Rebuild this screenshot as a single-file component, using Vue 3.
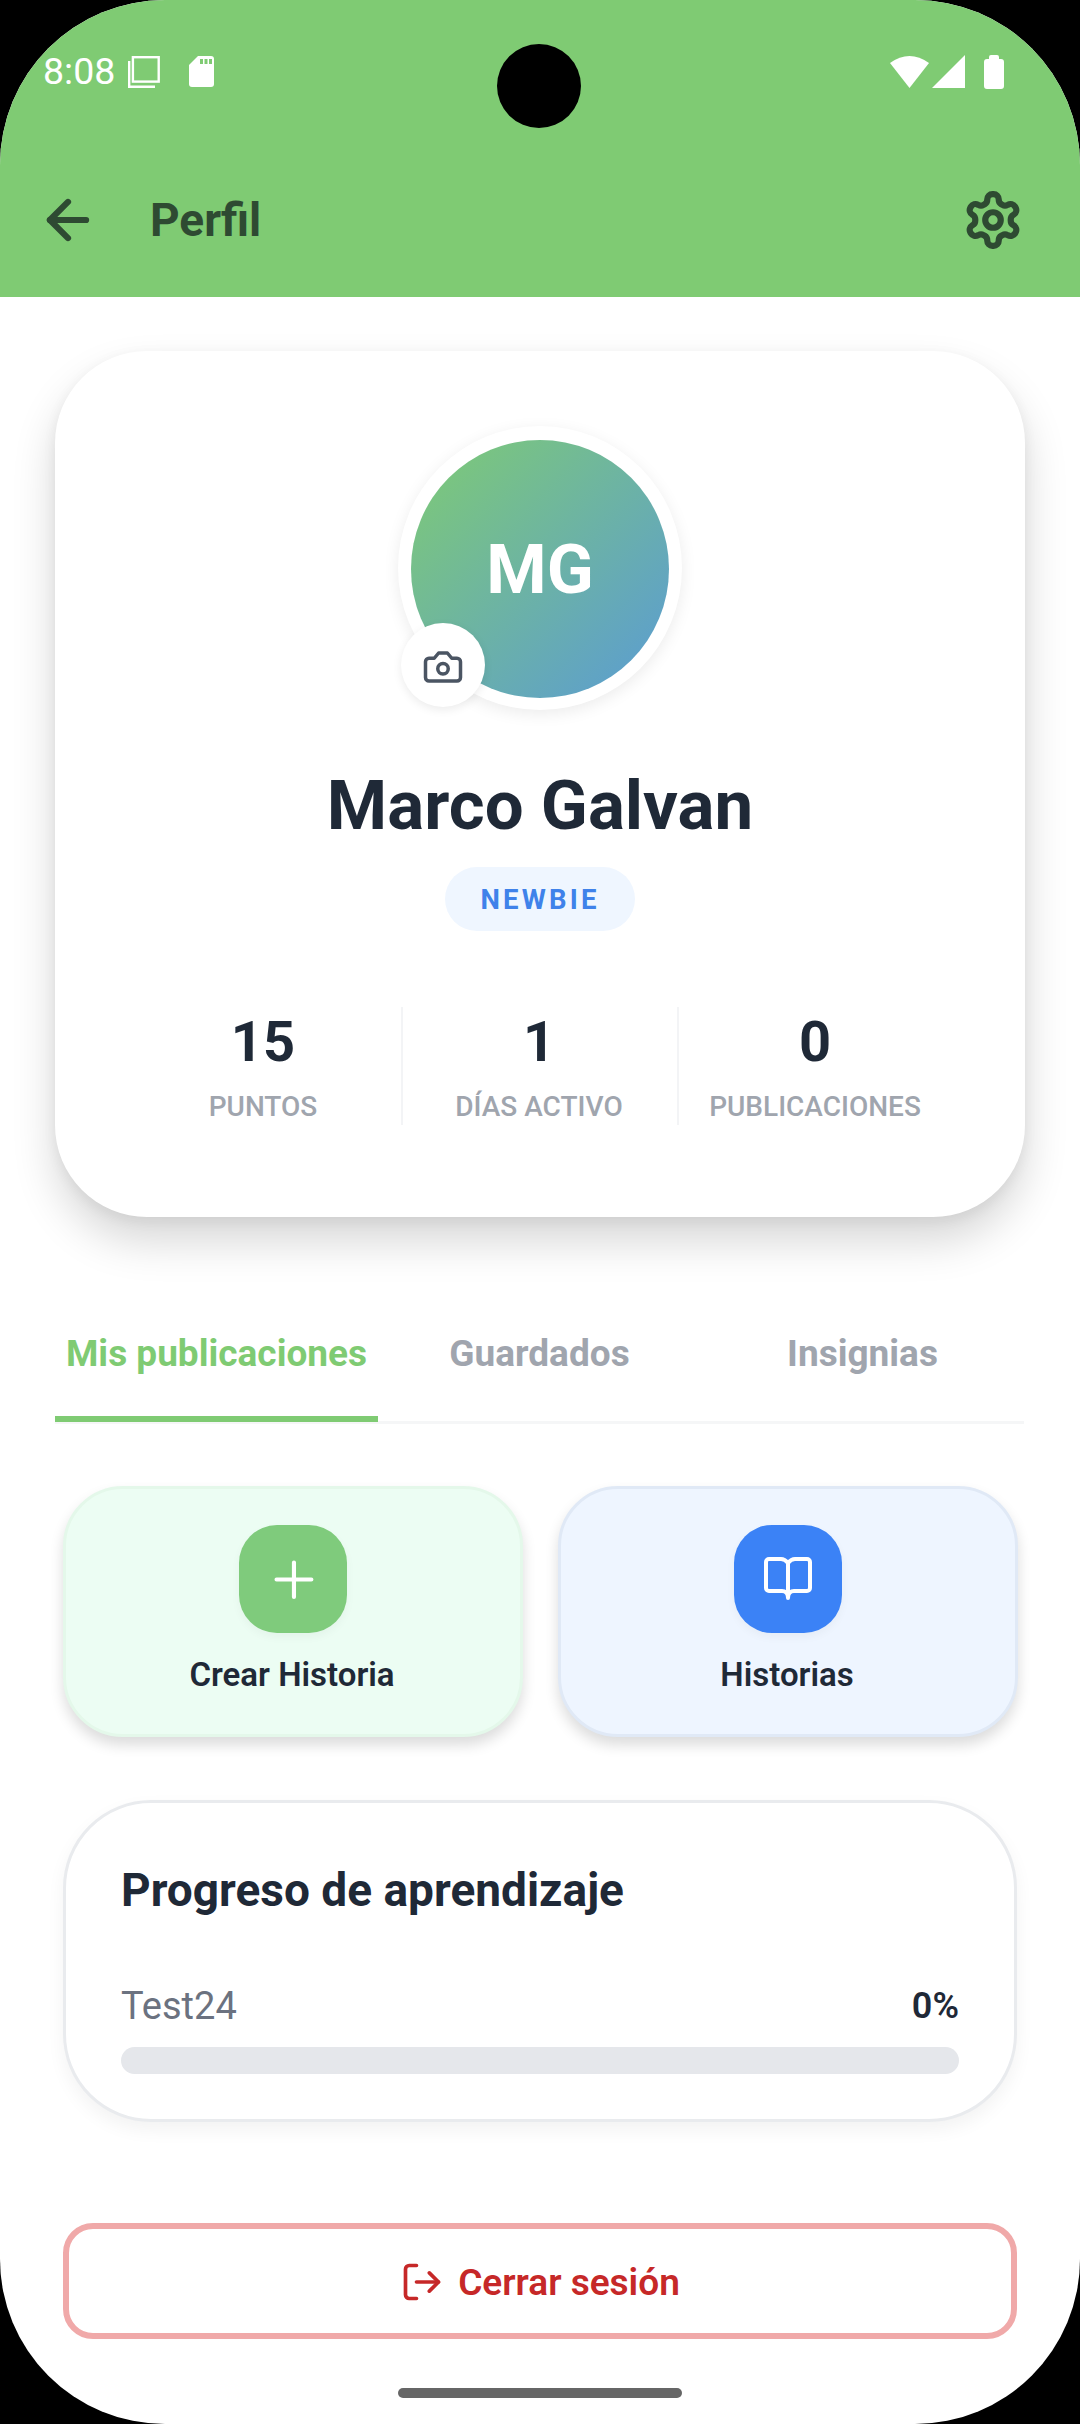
<script setup>
const stats = [
  { value: '15', label: 'PUNTOS' },
  { value: '1', label: 'DÍAS ACTIVO' },
  { value: '0', label: 'PUBLICACIONES' }
]
const tabs = ['Mis publicaciones', 'Guardados', 'Insignias']
</script>

<template>
  <div class="device">
    <div class="screen">
      <header class="header">
        <div class="status">
          <span class="time">8:08</span>
          <svg class="ic-layers" width="32" height="32" viewBox="0 0 32 32" fill="none" stroke="#fff" stroke-width="2.4">
            <rect x="4.9" y="1.2" width="25.8" height="24.4" />
            <path d="M1.2 5V30.8H27" />
          </svg>
          <svg class="ic-sd" width="25" height="31" viewBox="0 0 25 31">
            <path fill="#fff" d="M9 0H22a3 3 0 0 1 3 3V28a3 3 0 0 1-3 3H3a3 3 0 0 1-3-3V9Z" />
            <path fill="#7FCB73" d="M11 3h3v5h-3zM15.500 3h3v5h-3zM20 3h3v5h-3z" />
          </svg>
          <div class="status-right">
            <svg width="39" height="32" viewBox="0 0 39 32"><path fill="#fff" d="M0 7Q19.500-7 39 7L19.500 32Z" /></svg>
            <svg class="ic-signal" width="33" height="33" viewBox="0 0 33 33"><path fill="#fff" d="M33 0V33H0Z" /></svg>
            <svg class="ic-battery" width="20" height="34" viewBox="0 0 20 34">
              <path fill="#fff" d="M5 4V2a2 2 0 0 1 2-2h6a2 2 0 0 1 2 2v2h2a3 3 0 0 1 3 3V31a3 3 0 0 1-3 3H3a3 3 0 0 1-3-3V7a3 3 0 0 1 3-3Z" />
            </svg>
          </div>
        </div>
        <div class="appbar">
          <svg class="ic-back" width="62" height="62" viewBox="0 0 24 24" fill="none" stroke="#2E4A32" stroke-width="2.4" stroke-linecap="round" stroke-linejoin="round">
            <path d="m12 19-7-7 7-7" /><path d="M19 12H5" />
          </svg>
          <span class="title">Perfil</span>
          <svg class="ic-gear" width="62" height="62" viewBox="0 0 24 24" fill="none" stroke="#2E4A32" stroke-width="2.4" stroke-linecap="round" stroke-linejoin="round">
            <path d="M12.220 2h-.44a2 2 0 0 0-2 2v.18a2 2 0 0 1-1 1.730l-.43.25a2 2 0 0 1-2 0l-.15-.08a2 2 0 0 0-2.730.73l-.22.38a2 2 0 0 0 .73 2.730l.15.1a2 2 0 0 1 1 1.720v.51a2 2 0 0 1-1 1.740l-.15.09a2 2 0 0 0-.73 2.730l.22.38a2 2 0 0 0 2.730.73l.15-.08a2 2 0 0 1 2 0l.43.25a2 2 0 0 1 1 1.730V20a2 2 0 0 0 2 2h.44a2 2 0 0 0 2-2v-.18a2 2 0 0 1 1-1.730l.43-.25a2 2 0 0 1 2 0l.15.08a2 2 0 0 0 2.730-.73l.22-.39a2 2 0 0 0-.73-2.730l-.15-.08a2 2 0 0 1-1-1.740v-.5a2 2 0 0 1 1-1.740l.15-.09a2 2 0 0 0 .73-2.730l-.22-.38a2 2 0 0 0-2.730-.73l-.15.08a2 2 0 0 1-2 0l-.43-.25a2 2 0 0 1-1-1.730V4a2 2 0 0 0-2-2z" />
            <circle cx="12" cy="12" r="3" />
          </svg>
        </div>
      </header>

      <section class="card">
        <div class="avatar">
          <div class="avatar-inner">MG</div>
          <div class="camera">
            <svg width="42" height="42" viewBox="0 0 24 24" fill="none" stroke="#4B5563" stroke-width="2" stroke-linecap="round" stroke-linejoin="round">
              <path d="M14.500 4h-5L7 7H4a2 2 0 0 0-2 2v9a2 2 0 0 0 2 2h16a2 2 0 0 0 2-2V9a2 2 0 0 0-2-2h-3l-2.500-3z" />
              <circle cx="12" cy="13" r="3" />
            </svg>
          </div>
        </div>
        <h1 class="name">Marco Galvan</h1>
        <div class="badge">NEWBIE</div>
        <div class="stats">
          <div v-for="s in stats" :key="s.label" class="stat">
            <div class="stat-value">{{ s.value }}</div>
            <div class="stat-label">{{ s.label }}</div>
          </div>
        </div>
      </section>

      <nav class="tabs">
        <div v-for="(t, i) in tabs" :key="t" class="tab" :class="{ active: i === 0 }">{{ t }}</div>
      </nav>

      <div class="actions">
        <div class="action green">
          <div class="action-icon">
            <svg width="55" height="55" viewBox="0 0 24 24" fill="none" stroke="#fff" stroke-width="1.800" stroke-linecap="round">
              <path d="M4.600 12h15.200M12.200 4.600v15" />
            </svg>
          </div>
          <div class="action-label">Crear Historia</div>
        </div>
        <div class="action blue">
          <div class="action-icon">
            <svg width="48" height="44" viewBox="0 0 48 44" fill="none" stroke="#fff" stroke-width="4" stroke-linecap="round" stroke-linejoin="round">
              <path d="M24 6C22 3.500 20 2 17 2H5a3 3 0 0 0-3 3V31a3 3 0 0 0 3 3H18C21 34 24 36 24 41C24 36 27 34 30 34H43a3 3 0 0 0 3-3V5a3 3 0 0 0-3-3H31C28 2 26 3.500 24 6ZM24 6V41" />
            </svg>
          </div>
          <div class="action-label">Historias</div>
        </div>
      </div>

      <section class="progress">
        <h2 class="progress-title">Progreso de aprendizaje</h2>
        <div class="progress-row">
          <span class="progress-name">Test24</span>
          <span class="progress-value">0%</span>
        </div>
        <div class="bar"></div>
      </section>

      <button class="logout">
        <svg width="44" height="44" viewBox="0 0 24 24" fill="none" stroke="#C62828" stroke-width="2" stroke-linecap="round" stroke-linejoin="round">
          <path d="M9 21H5a2 2 0 0 1-2-2V5a2 2 0 0 1 2-2h4" /><path d="m16 17 5-5-5-5" /><path d="M21 12H9" />
        </svg>
        <span>Cerrar sesión</span>
      </button>

      <div class="punch"></div>
      <div class="home"></div>
    </div>
  </div>
</template>

<style>
html, body { margin: 0; background: #000; }
</style>

<style scoped>
* { box-sizing: border-box; }
.device { width: 1080px; height: 2424px; background: #000; font-family: Roboto, "Noto Sans", sans-serif; }
.screen { position: relative; width: 1080px; height: 2424px; background: #fff; border-radius: 165px; overflow: hidden; }

.header { height: 297px; background: #7FCB73; }
.status { height: 143px; display: flex; align-items: center; padding: 0 76px 0 43px; color: #fff; }
.time { font-size: 37.500px; font-weight: 400; line-height: 1; width: 70px; }
.ic-layers { margin-left: 15px; }
.ic-sd { margin-left: 29px; }
.status-right { margin-left: auto; display: flex; align-items: center; }
.ic-signal { margin-left: 3px; }
.ic-battery { margin-left: 19px; }
.appbar { height: 154px; display: flex; align-items: center; padding: 0 56px 0 37px; color: #2E4A32; }
.title { margin-left: 51px; font-size: 46px; font-weight: 700; }
.ic-gear { margin-left: auto; }

.card { margin: 54px 55px 0; height: 866px; padding-top: 75px; background: #fff; border-radius: 92px; display: flex; flex-direction: column; align-items: center; box-shadow: 0 24px 44px rgba(0,0,0,.16), 0 4px 14px rgba(0,0,0,.06); }
.avatar { position: relative; width: 284px; height: 284px; border-radius: 50%; background: #fff; padding: 14px 13px 12px; box-shadow: 0 4px 16px rgba(0,0,0,.08); }
.avatar-inner { width: 100%; height: 100%; border-radius: 50%; background: linear-gradient(135deg, #7FCB73, #5A9BD5); color: #fff; font-size: 69px; font-weight: 700; display: flex; align-items: center; justify-content: center; }
.camera { position: absolute; left: 3px; top: 197px; width: 84px; height: 84px; padding-top: 4px; border-radius: 50%; background: #fff; display: flex; align-items: center; justify-content: center; box-shadow: 0 3px 10px rgba(0,0,0,.08); }
.name { margin: 54px 0 0; font-size: 69px; line-height: 84px; font-weight: 700; color: #1F2937; }
.badge { margin-top: 19px; width: 190px; height: 64px; border-radius: 32px; background: #EFF6FF; color: #3F82EA; font-size: 27.500px; font-weight: 700; letter-spacing: 3.200px; display: flex; align-items: center; justify-content: center; }
.stats { margin-top: 76px; width: 828px; height: 118px; display: grid; grid-template-columns: repeat(3, 1fr); }
.stat { position: relative; padding-right: 2px; text-align: center; }
.stat:not(:last-child)::after { content: ""; position: absolute; right: -1px; top: 0; bottom: 0; width: 2px; background: #F3F4F6; }
.stat-value { font-size: 56px; line-height: 70px; font-weight: 700; color: #1F2937; }
.stat-label { margin-top: 12px; font-size: 28px; line-height: 36px; font-weight: 500; color: #A0A5AE; }

.tabs { margin: 73px 56px 0 55px; display: grid; grid-template-columns: repeat(3, 1fr); border-bottom: 3px solid #F5F6F7; }
.tab { height: 132px; margin-bottom: -1px; padding: 40px 0 38px; border-bottom: 6px solid transparent; text-align: center; font-size: 37px; line-height: 48px; font-weight: 700; color: #A0A5AE; }
.tab.active { color: #7FCB73; border-bottom-color: #7FCB73; }

.actions { margin: 62px 62px 0 63px; display: grid; grid-template-columns: 460px 460px; column-gap: 35px; }
.action { height: 251px; padding-top: 36px; border-radius: 60px; border-width: 3px; border-style: solid; display: flex; flex-direction: column; align-items: center; box-shadow: 0 8px 14px rgba(0,0,0,.14); }
.action.green { background: #ECFDF3; border-color: #E4F8EA; }
.action.blue { background: #EEF5FF; border-color: #E0E9F6; }
.action-icon { width: 108px; height: 108px; border-radius: 38px; display: flex; align-items: center; justify-content: center; box-shadow: 0 4px 10px rgba(0,0,0,.04); }
.green .action-icon { background: #7FCB7C; }
.blue .action-icon { background: #3B82F6; }
.action-label { margin: 20px 2px 0 0; font-size: 33px; line-height: 44px; font-weight: 600; color: #1F2937; }

.progress { margin: 63px 63px 0; height: 322px; padding: 59px 55px 0; border: 3px solid #E9EBEE; border-radius: 88px; background: #fff; box-shadow: 0 8px 18px rgba(0,0,0,.05); }
.progress-title { margin: 0; font-size: 46px; line-height: 56px; font-weight: 700; color: #1F2937; }
.progress-row { margin-top: 65px; display: flex; justify-content: space-between; line-height: 46px; }
.progress-name { font-size: 38px; font-weight: 400; color: #6B7280; }
.progress-value { font-size: 36px; font-weight: 600; color: #1F2937; }
.bar { margin-top: 18px; height: 27px; border-radius: 14px; background: #E5E7EB; }

.logout { display: flex; align-items: center; justify-content: center; gap: 14px; margin: 101px 63px 0; width: 954px; height: 116px; padding: 2px 0 0; background: #fff; border: 6px solid #F0A9A9; border-radius: 30px; color: #C62828; font-family: inherit; font-size: 37px; font-weight: 600; }

.punch { position: absolute; left: 497px; top: 44px; width: 84px; height: 84px; border-radius: 50%; background: #000; }
.home { position: absolute; left: 398px; top: 2388px; width: 284px; height: 10px; border-radius: 5px; background: #666; }
</style>
